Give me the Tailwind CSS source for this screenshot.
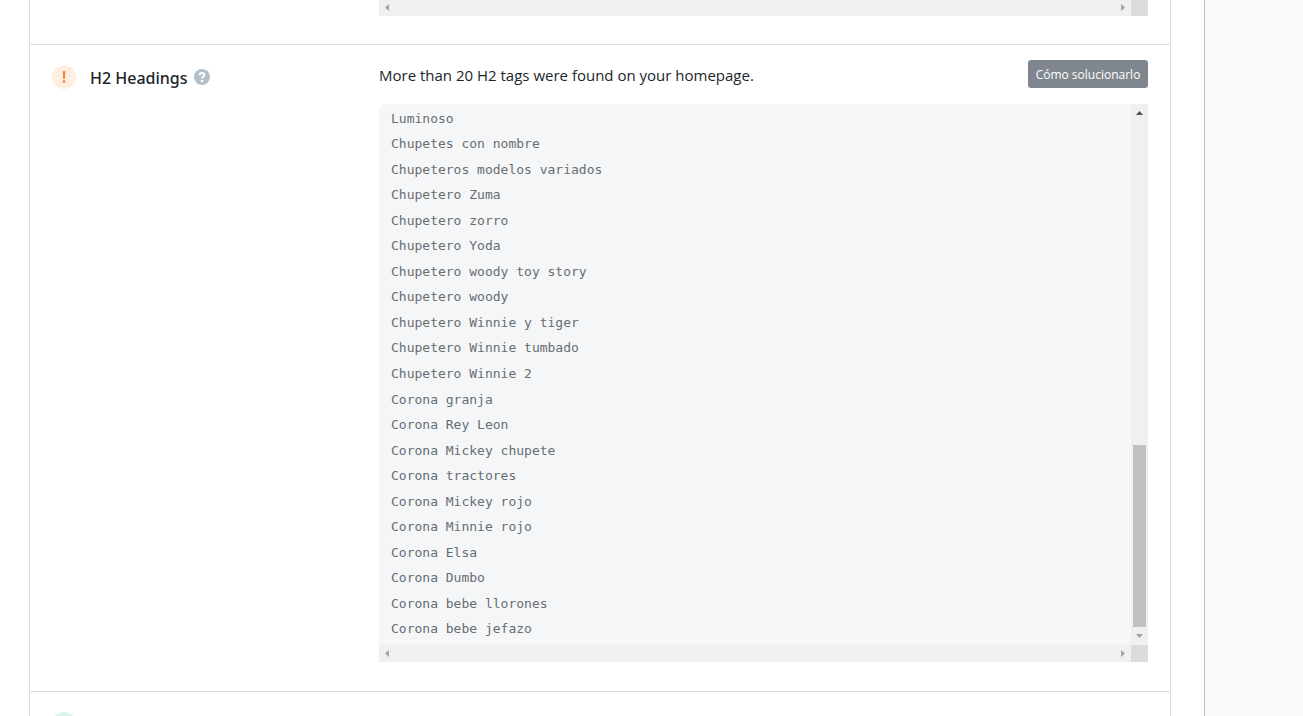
<!DOCTYPE html>
<html lang="es">
<head>
  <meta charset="UTF-8">
  <meta name="viewport" content="width=device-width, initial-scale=1.0">
  <title>H2 Headings</title>
  <script src="https://cdn.jsdelivr.net/npm/@tailwindcss/browser@4"></script>
</head>
<body class="flex h-screen overflow-hidden bg-[#f8f9fb] font-['Open_Sans',sans-serif] text-[#212529]">
  <main class="flex-1 border-r border-[#b1bec8] bg-white pr-[33px] pl-[29px]">
    <div class="h-full overflow-hidden border-x border-[#dadfe3]">

      <!-- previous check, end of its list -->
      <section class="flex border-b border-[#dadfe3] pr-[22px] pb-7 pl-[349px]">
        <div class="flex h-4 flex-1 items-start justify-between bg-[#f0f0f0] px-1.5 pt-1">
          <svg class="h-[7px] w-1 fill-[#a3a3a3]" viewBox="0 0 4 7"><path d="M4 0v7L0 3.5z"/></svg>
          <svg class="h-[7px] w-1 fill-[#a3a3a3]" viewBox="0 0 4 7"><path d="M0 0v7l4-3.5z"/></svg>
        </div>
        <div class="h-4 w-[17px] bg-[#dcdcdc]"></div>
      </section>

      <!-- H2 check -->
      <section class="flex border-b border-[#dcdcdc] pr-[22px] pb-[29px] pl-[22px]">
        <div class="flex w-[327px] shrink-0 items-start pt-5">
          <svg class="size-6" viewBox="0 0 24 24">
            <circle cx="12" cy="12" r="12" fill="#ffefe2"/>
            <path d="M10.8 6h2.5l-.4 8h-1.7z" fill="#fb8138"/>
            <circle cx="12" cy="16.5" r="1.3" fill="#fb8138"/>
          </svg>
          <h2 class="ml-3.5 pt-px font-['Noto_Sans',sans-serif] text-base leading-6 font-medium">H2 Headings</h2>
          <button class="mt-1 ml-1.5" aria-label="Ayuda">
            <svg class="size-4" viewBox="0 0 16 16">
              <circle cx="8" cy="8" r="8" fill="#b3bfca"/>
              <path d="M5.6 6.2C5.7 4.7 6.7 4.1 8 4.1c1.3 0 2.3.7 2.3 1.9 0 1.7-2.2 1.6-2.2 3.4" fill="none" stroke="#fff" stroke-width="2"/>
              <circle cx="8" cy="12" r="1.3" fill="#fff"/>
            </svg>
          </button>
        </div>

        <div class="min-w-0 flex-1 pt-[15px]">
          <div class="flex items-start justify-between">
            <p class="pt-[3px] text-[15px] leading-6">More than 20 H2 tags were found on your homepage.</p>
            <button class="h-7 w-[120px] rounded-[3px] bg-[#80868e] pt-0.5 text-xs whitespace-nowrap text-white">Cómo solucionarlo</button>
          </div>

          <div class="mt-4 grid grid-cols-[1fr_17px] overflow-hidden rounded-tl-md">
            <div class="bg-[#f4f6f8] px-3 pt-0.5 pb-[3px]">
              <ul class="grid h-[536px] auto-rows-fr items-center font-['DejaVu_Sans_Mono',monospace] text-[13px] leading-5 whitespace-nowrap text-[#686d72]">
                <li>Luminoso</li>
                <li>Chupetes con nombre</li>
                <li>Chupeteros modelos variados</li>
                <li>Chupetero Zuma</li>
                <li>Chupetero zorro</li>
                <li>Chupetero Yoda</li>
                <li>Chupetero woody toy story</li>
                <li>Chupetero woody</li>
                <li>Chupetero Winnie y tiger</li>
                <li>Chupetero Winnie tumbado</li>
                <li>Chupetero Winnie 2</li>
                <li>Corona granja</li>
                <li>Corona Rey Leon</li>
                <li>Corona Mickey chupete</li>
                <li>Corona tractores</li>
                <li>Corona Mickey rojo</li>
                <li>Corona Minnie rojo</li>
                <li>Corona Elsa</li>
                <li>Corona Dumbo</li>
                <li>Corona bebe llorones</li>
                <li>Corona bebe jefazo</li>
              </ul>
            </div>
            <!-- vertical scrollbar -->
            <div class="flex flex-col items-center bg-[#f0f0f0] py-[7px]">
              <svg class="h-1 w-[7px] fill-[#505050]" viewBox="0 0 7 4"><path d="M0 4h7L3.5 0z"/></svg>
              <div class="mt-auto mb-[7px] h-[182px] w-[13px] bg-[#c1c1c1]"></div>
              <svg class="h-1 w-[7px] fill-[#a3a3a3]" viewBox="0 0 7 4"><path d="M0 0h7L3.5 4z"/></svg>
            </div>
            <!-- horizontal scrollbar -->
            <div class="flex h-[17px] items-center justify-between bg-[#f0f0f0] px-1.5">
              <svg class="h-[7px] w-1 fill-[#a3a3a3]" viewBox="0 0 4 7"><path d="M4 0v7L0 3.5z"/></svg>
              <svg class="h-[7px] w-1 fill-[#a3a3a3]" viewBox="0 0 4 7"><path d="M0 0v7l4-3.5z"/></svg>
            </div>
            <div class="bg-[#dcdcdc]"></div>
          </div>
        </div>
      </section>

      <!-- next check -->
      <section class="px-[22px] pt-5">
        <div class="size-6 rounded-full bg-[#dbf5eb]"></div>
      </section>
    </div>
  </main>
  <aside class="w-[98px] shrink-0"></aside>
</body>
</html>
